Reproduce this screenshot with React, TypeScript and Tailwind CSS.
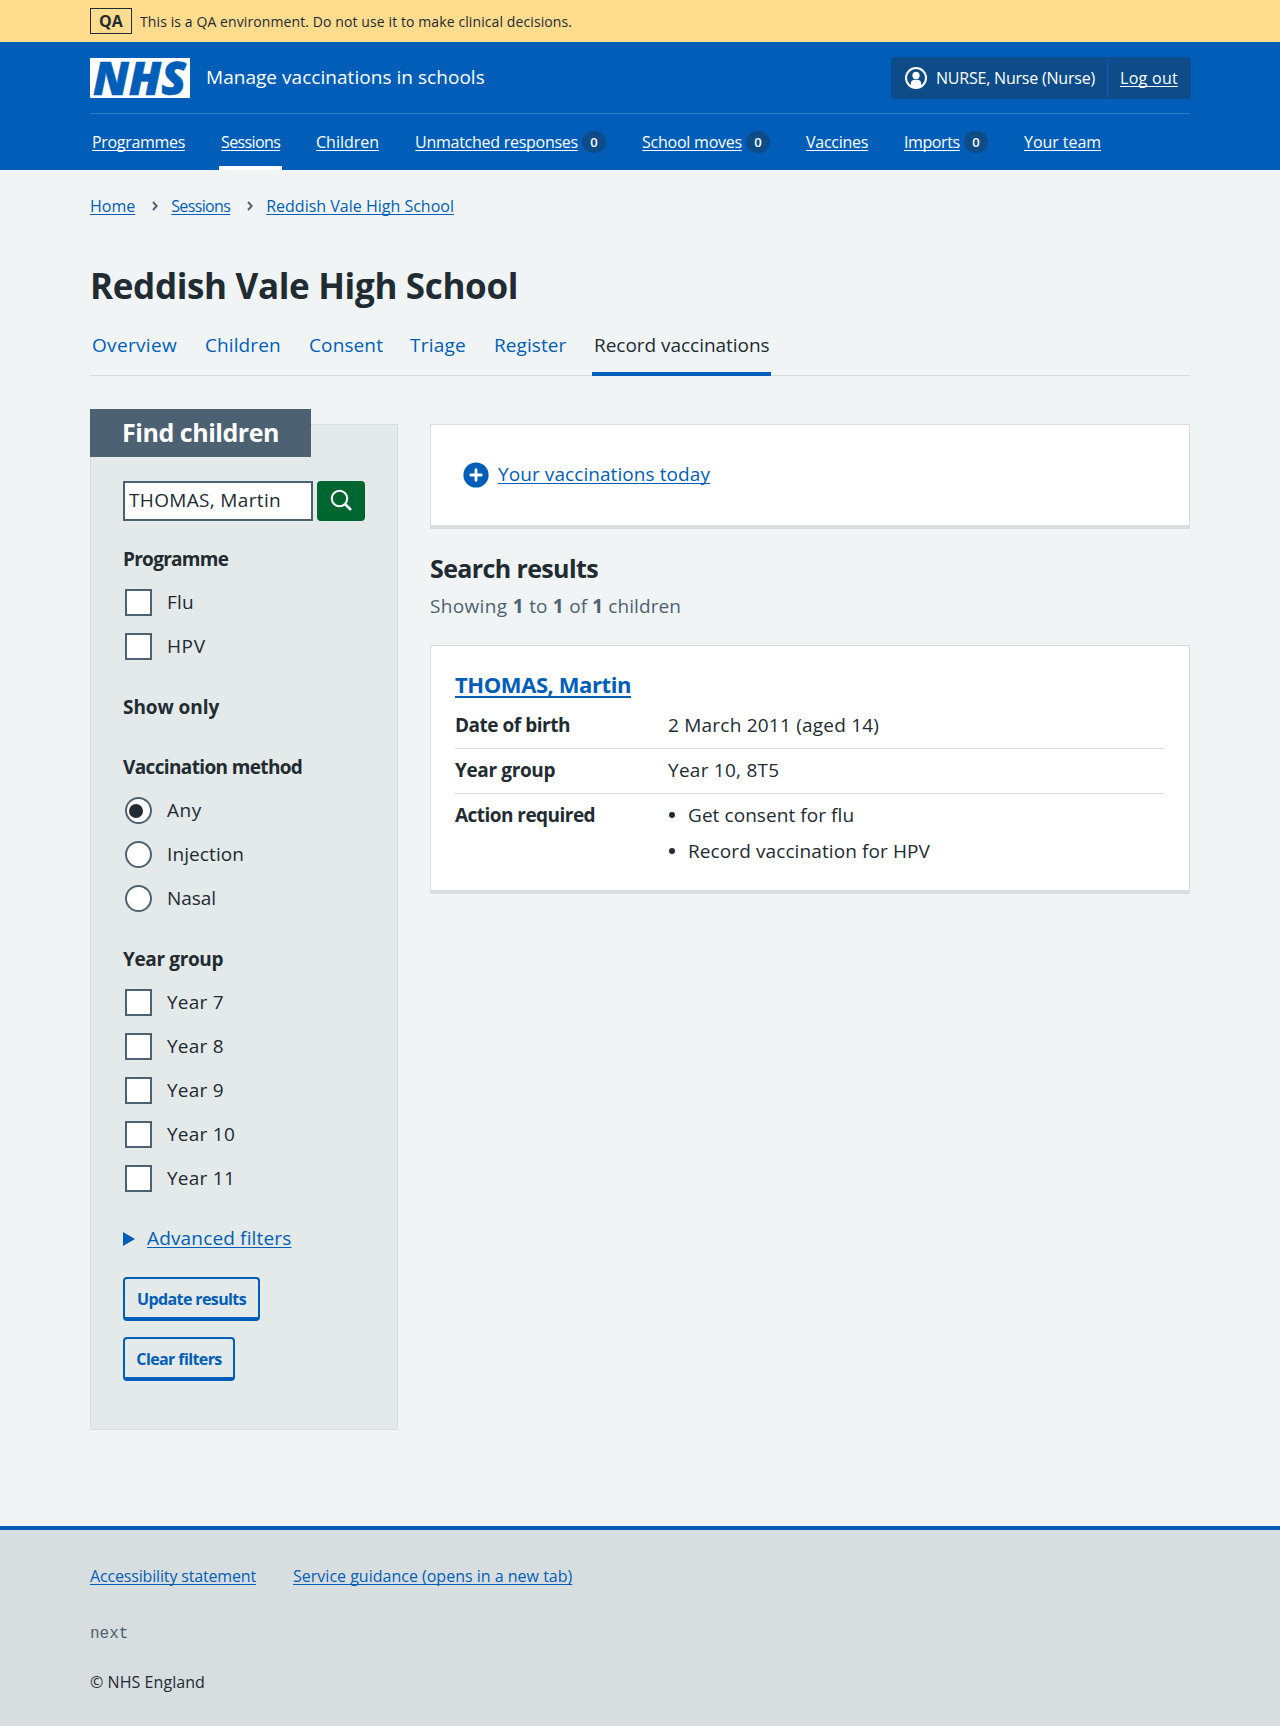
import type { ReactNode } from "react";

const link = "underline decoration-1 underline-offset-[2px] [text-decoration-skip-ink:none]";

function NhsLogo() {
  return (
    <svg width="100" height="40" viewBox="0 0 100 40" role="img" aria-label="NHS" className="block shrink-0 overflow-visible">
      <rect width="100" height="40" fill="#fff" />
      <text
        x="3"
        y="36.500"
        textLength="93"
        lengthAdjust="spacingAndGlyphs"
        fontFamily="Open Sans, sans-serif"
        fontSize="46"
        fontWeight="800"
        fontStyle="italic"
        fill="#005eb8"
        stroke="#005eb8"
        strokeWidth="0.600"
      >
        NHS
      </text>
    </svg>
  );
}

function UserIcon() {
  return (
    <svg width="22" height="22" viewBox="0 0 22 22" className="block shrink-0">
      <circle cx="11" cy="11" r="10" fill="none" stroke="#fff" strokeWidth="2" />
      <circle cx="11" cy="8.400" r="3.600" fill="#fff" />
      <path d="M5.800 19.600v-2.800c0-2.400 1.700-4 4-4h2.400c2.300 0 4 1.600 4 4v2.800c-3 2-7.400 2-10.400 0z" fill="#fff" />
    </svg>
  );
}

function Chevron() {
  return (
    <svg width="6" height="10" viewBox="0 0 6 10" className="block shrink-0">
      <path d="M1 1l3.700 4L1 9" fill="none" stroke="#4c6272" strokeWidth="1.900" />
    </svg>
  );
}

function Badge() {
  return (
    <span className="ml-[4px] flex h-[22px] w-6 items-center justify-center rounded-full bg-[#0d4c88] pt-px text-[13px] font-semibold leading-none">
      0
    </span>
  );
}

type NavItem = { label: string; cls: string; badge?: boolean; active?: boolean };
const nav: NavItem[] = [
  { label: "Programmes", cls: "tracking-[-0.31px] w-[93px]" },
  { label: "Sessions", cls: "tracking-[-0.62px] w-[59px]", active: true },
  { label: "Children", cls: "w-[63px]" },
  { label: "Unmatched responses", cls: "tracking-[-0.26px] w-[163px]", badge: true },
  { label: "School moves", cls: "tracking-[-0.23px] w-[100px]", badge: true },
  { label: "Vaccines", cls: "tracking-[-0.25px] w-[62px]" },
  { label: "Imports", cls: "tracking-[-0.4px] w-[56px]", badge: true },
  { label: "Your team", cls: "tracking-[-0.05px] w-[77px]" },
];

const tabs = [
  { label: "Overview", cls: "tracking-[0.33px] w-[89px]" },
  { label: "Children", cls: "tracking-[0.1px] w-[80px]" },
  { label: "Consent", cls: "tracking-[0.12px] w-[77px]" },
  { label: "Triage", cls: "tracking-[0.2px] w-[60px]" },
  { label: "Register", cls: "tracking-[0.08px] w-[76px]" },
];

function Group({ title, cls, children }: { title: string; cls: string; children?: ReactNode }) {
  return (
    <fieldset className="mb-4">
      <div className={"flex h-11 items-center pt-[2px] font-bold " + cls}>{title}</div>
      {children}
    </fieldset>
  );
}

function Check({ label, cls }: { label: string; cls: string }) {
  return (
    <label className="flex h-11 items-center pl-[1.500px]">
      <span className="mt-px size-[27px] border-2 border-[#4c6272] bg-white" />
      <span className={"ml-[15.500px] " + cls}>{label}</span>
    </label>
  );
}

function Radio({ label, cls, on }: { label: string; cls: string; on?: boolean }) {
  return (
    <label className="flex h-11 items-center pl-[1.500px]">
      <span className="mt-px flex size-[27px] items-center rounded-full border-2 border-[#4c6272] bg-white">
        {on && <span className="ml-[2px] size-[14px] rounded-full bg-[#212b32]" />}
      </span>
      <span className={"ml-[15.500px] " + cls}>{label}</span>
    </label>
  );
}

function OutlineButton({ label, cls }: { label: string; cls: string }) {
  return (
    <button
      className={
        "flex h-[44px] items-center justify-center whitespace-nowrap rounded-[4px] border-2 border-b-4 border-[#005eb8] pt-[2px] text-[16px] font-bold tracking-[-0.6px] text-[#005eb8] " +
        cls
      }
    >
      {label}
    </button>
  );
}

export default function App() {
  return (
    <div className="min-h-[1726px] bg-[#f0f4f5] font-['Open_Sans',sans-serif] text-[19px] text-[#212b32]">
      <div className="h-[42px] bg-[#ffdc8e]">
        <div className="mx-auto flex h-full w-[1100px] items-center">
          <span className="flex h-[26px] w-[42px] items-center justify-center border border-[#212b32] text-[16px] font-bold leading-none">
            QA
          </span>
          <span className="ml-2 whitespace-nowrap pt-px text-[14px] tracking-[0.1px]">
            This is a QA environment. Do not use it to make clinical decisions.
          </span>
        </div>
      </div>

      <header className="h-[128px] bg-[#005eb8] text-white">
        <div className="mx-auto w-[1100px]">
          <div className="flex h-[72px] items-center border-b border-[#337ec6]">
            <NhsLogo />
            <span className="ml-4 tracking-[0.04px]">Manage vaccinations in schools</span>
            <div className="-mr-px ml-auto flex h-[42px] w-[300px] items-center rounded-[4px] bg-[#0d4c88] text-[16px]">
              <div className="flex h-10 w-[217px] items-center whitespace-nowrap border-r border-[#005eb8] pl-[14px]">
                <UserIcon />
                <span className="ml-[9px] tracking-[-0.21px]">NURSE, Nurse (Nurse)</span>
              </div>
              <a className={"ml-3 whitespace-nowrap tracking-[0.3px] " + link}>Log out</a>
            </div>
          </div>
          <nav className="flex h-14 gap-8 text-[16px]">
            {nav.map((n) => (
              <div
                key={n.label}
                className={
                  "flex items-center whitespace-nowrap border-y-4 border-t-transparent px-[2px] " +
                  (n.active ? "border-b-white" : "border-b-transparent")
                }
              >
                <a className={link + " " + n.cls}>{n.label}</a>
                {n.badge && <Badge />}
              </div>
            ))}
          </nav>
        </div>
      </header>

      <main className="mx-auto h-[1356px] w-[1100px] pt-6">
        <div className="flex h-6 items-center text-[16px] text-[#005eb8]">
          <a className={link}>Home</a>
          <span className="ml-[17px] mr-[13px]">
            <Chevron />
          </span>
          <a className={"tracking-[-0.64px] " + link}>Sessions</a>
          <span className="ml-[17px] mr-[13px]">
            <Chevron />
          </span>
          <a className={link}>Reddish Vale High School</a>
        </div>

        <h1 className="mt-[45px] flex h-[46px] items-center text-[35px] font-bold tracking-[-0.34px]">
          Reddish Vale High School
        </h1>

        <div className="mt-[3px] flex h-[64px] gap-[24px] shadow-[inset_0_-1px_#d8dde0]">
          {tabs.map((t) => (
            <a key={t.label} className={"flex items-center whitespace-nowrap px-[2px] pt-[2px] text-[#005eb8] " + t.cls}>
              {t.label}
            </a>
          ))}
          <a className="flex w-[179px] items-center whitespace-nowrap border-y-4 border-b-[#005eb8] border-t-transparent px-[2px] pt-[2px] tracking-[-0.03px]">
            Record vaccinations
          </a>
        </div>

        <div className="mt-12 flex items-start gap-8">
          <aside className="h-[1006px] w-[308px] border border-[#d8dde0] bg-[#e4e9e9]">
            <h2 className="-ml-px -mt-4 flex h-12 w-[221px] items-center bg-[#4c6272] pl-8 text-[25px] font-bold tracking-[-0.46px] text-white">
              Find children
            </h2>
            <div className="px-8 pt-6">
              <div className="flex gap-1">
                <div className="flex h-10 w-[190px] items-center whitespace-nowrap border-2 border-[#4c6272] bg-white pb-[2px] pl-1 tracking-[0.34px]">
                  THOMAS, Martin
                </div>
                <button className="flex h-10 w-12 items-center justify-center rounded-[4px] bg-[#00662f]">
                  <svg width="22" height="22" viewBox="0 0 22 22" fill="none" stroke="#fff" strokeWidth="2.100" className="-mt-[3px]">
                    <circle cx="9.500" cy="9.500" r="7.700" />
                    <path d="M15 15l6 6" strokeWidth="2.600" />
                  </svg>
                </button>
              </div>
              <div className="mt-[15px]">
                <Group title="Programme" cls="tracking-[-0.72px]">
                  <Check label="Flu" cls="tracking-[0.25px]" />
                  <Check label="HPV" cls="tracking-[0.6px]" />
                </Group>
                <Group title="Show only" cls="tracking-[-0.06px]" />
                <Group title="Vaccination method" cls="tracking-[-0.64px]">
                  <Radio label="Any" cls="tracking-[0.6px]" on />
                  <Radio label="Injection" cls="tracking-[0.1px]" />
                  <Radio label="Nasal" cls="tracking-[-0.05px]" />
                </Group>
                <Group title="Year group" cls="tracking-[-0.36px]">
                  {["Year 7", "Year 8", "Year 9", "Year 10", "Year 11"].map((y) => (
                    <Check key={y} label={y} cls="tracking-[0.25px]" />
                  ))}
                </Group>
              </div>
              <div className="flex h-11 items-center text-[#005eb8]">
                <svg width="12" height="14" viewBox="0 0 12 14" className="mt-px block">
                  <path d="M0 0l12 7-12 7z" fill="#005eb8" />
                </svg>
                <a className={"ml-3 tracking-[0.16px] " + link}>Advanced filters</a>
              </div>
              <div className="mt-[17px] flex flex-col gap-4">
                <OutlineButton label="Update results" cls="w-[137px]" />
                <OutlineButton label="Clear filters" cls="w-[112px]" />
              </div>
            </div>
          </aside>

          <section className="w-[760px]">
            <div className="flex h-[105px] items-center border border-b-4 border-[#d8dde0] bg-white pl-[32px] text-[#005eb8]">
              <svg width="26" height="26" viewBox="0 0 26 26" className="block">
                <circle cx="13" cy="13" r="12.600" fill="#005eb8" />
                <path d="M13 7.700v10.600M7.700 13h10.600" stroke="#fff" strokeWidth="2.800" strokeLinecap="round" />
              </svg>
              <a className={"mb-[2px] ml-[9px] tracking-[0.08px] " + link}>Your vaccinations today</a>
            </div>

            <h2 className="mt-[24px] flex h-8 items-center text-[25px] font-bold tracking-[-0.62px]">
              Search results
            </h2>
            <p className="mt-[7px] h-7 leading-7 tracking-[0.1px] text-[#4c6272]">
              <span className="tracking-[0.35px]">Showing </span>
              <b className="font-bold tracking-[0.6px]">1</b> to <b className="font-bold tracking-[0.6px]">1</b> of{" "}
              <b className="font-bold">1</b> children
            </p>

            <div className="mt-[25px] h-[249px] border border-b-4 border-[#d8dde0] bg-white px-6 pt-[23px]">
              <h3 className="flex h-[30px] items-center text-[22px] font-bold tracking-[-0.42px] text-[#005eb8]">
                <a className="underline decoration-2 underline-offset-[3px] [text-decoration-skip-ink:none]">
                  THOMAS, Martin
                </a>
              </h3>
              <dl className="leading-7">
                <div className="flex h-[50px] border-b border-[#d8dde0] pt-[12px]">
                  <dt className="w-[213px] font-bold tracking-[-0.48px]">Date of birth</dt>
                  <dd className="tracking-[0.22px]">2 March 2011 (aged 14)</dd>
                </div>
                <div className="flex h-[45px] border-b border-[#d8dde0] pt-[7px]">
                  <dt className="w-[213px] font-bold tracking-[-0.36px]">Year group</dt>
                  <dd className="tracking-[0.26px]">Year 10, 8T5</dd>
                </div>
                <div className="flex pt-[7px]">
                  <dt className="w-[213px] font-bold tracking-[-0.54px]">Action required</dt>
                  <dd>
                    <ul className="flex flex-col gap-2">
                      <li className="flex items-center tracking-[0.07px]">
                        <span className="ml-px mr-[13px] size-[6px] rounded-full bg-[#212b32]" />
                        Get consent for flu
                      </li>
                      <li className="flex items-center tracking-[0.1px]">
                        <span className="ml-px mr-[13px] size-[6px] rounded-full bg-[#212b32]" />
                        Record vaccination for HPV
                      </li>
                    </ul>
                  </dd>
                </div>
              </dl>
            </div>
          </section>
        </div>
      </main>

      <footer className="h-[200px] border-t-4 border-[#005eb8] bg-[#d8dde0] text-[16px] leading-6">
        <div className="mx-auto w-[1100px] pt-[34px]">
          <div className="flex gap-[37px] text-[#005eb8]">
            <a className={"tracking-[-0.16px] " + link}>Accessibility statement</a>
            <a className={link}>Service guidance (opens in a new tab)</a>
          </div>
          <p className="mt-[34px] font-['Liberation_Mono',monospace] text-[#4c6272]">next</p>
          <p className="mt-[24px] tracking-[0.06px]">© NHS England</p>
        </div>
      </footer>
    </div>
  );
}
